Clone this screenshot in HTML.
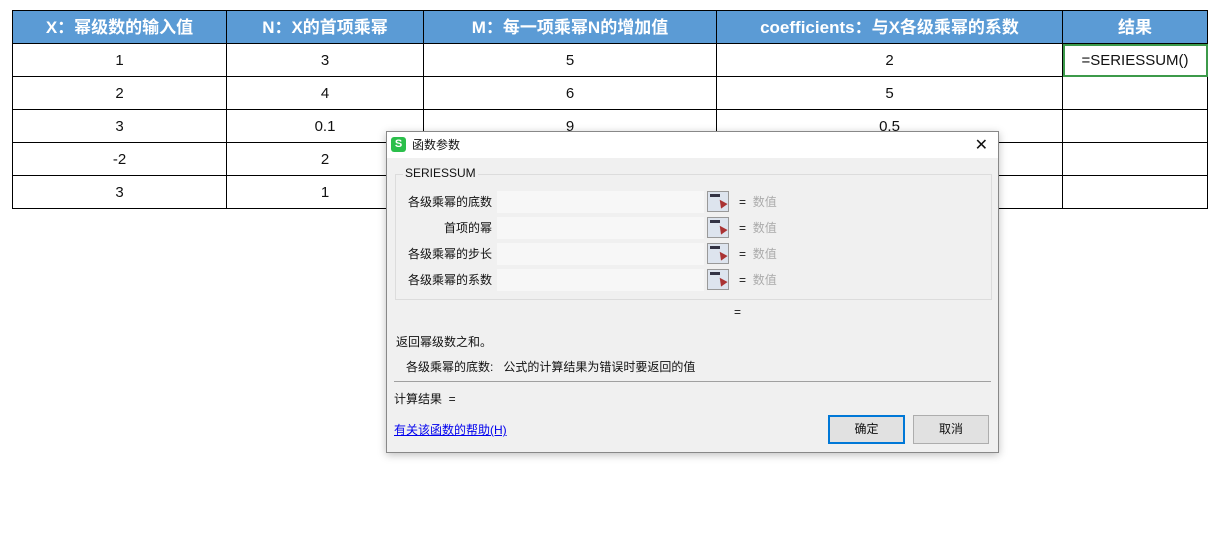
<!DOCTYPE html>
<html><head><meta charset="utf-8"><style>
body{margin:0;width:1216px;height:537px;background:#fff;font-family:"Liberation Sans","Noto Sans CJK SC",sans-serif;position:relative;overflow:hidden}
table{position:absolute;left:12px;top:10px;border-collapse:collapse;}
td{border:1px solid #000;text-align:center;font-size:15px;height:32px;padding:0;color:#111}
th{background:#5b9bd5;color:#fff;font-size:17px;font-weight:bold;border:1px solid #000;height:28px;padding:0 0 4px 0}
.dlg{position:absolute;left:386px;top:131px;width:611px;height:320px;background:#f0f0f0;border:1px solid #888;box-shadow:0 2px 8px rgba(0,0,0,.25);font-size:12px;color:#111}
.tb{height:26px;background:#fff;position:relative}
.abs{position:absolute}
.inp{position:absolute;left:110px;width:207px;height:22px;background:#f7f7f7}
.ib{position:absolute;left:320px;width:20px;height:19px;border:1px solid #999;background:#dde4ee}
.ib:before{content:"";position:absolute;left:2px;top:2px;width:10px;height:3px;background:#334}
.ib:after{content:"";position:absolute;left:10px;top:7px;border-left:4px solid transparent;border-right:4px solid transparent;border-bottom:8px solid #a33;transform:rotate(-35deg)}
.lab{position:absolute;right:506px;white-space:nowrap}
.btn{position:absolute;top:283px;width:74px;height:27px;border:1px solid #adadad;background:#e1e1e1;text-align:center;line-height:27px}
</style></head><body>
<table>
<tr><th style="width:213px">X：幂级数的输入值</th><th style="width:196px">N：X的首项乘幂</th><th style="width:292px">M：每一项乘幂N的增加值</th><th style="width:345px">coefficients：与X各级乘幂的系数</th><th style="width:144px">结果</th></tr>
<tr><td>1</td><td>3</td><td>5</td><td>2</td><td style="outline:2px solid #3c9a4a;outline-offset:-2px">=SERIESSUM()</td></tr>
<tr><td>2</td><td>4</td><td>6</td><td>5</td><td></td></tr>
<tr><td>3</td><td>0.1</td><td>9</td><td>0.5</td><td></td></tr>
<tr><td>-2</td><td>2</td><td></td><td></td><td></td></tr>
<tr><td>3</td><td>1</td><td></td><td></td><td></td></tr>
</table>
<div class="dlg">
<div class="tb"><div class="abs" style="left:4px;top:5px;width:15px;height:15px;background:#2bbf4b;border-radius:3px;color:#fff;font-size:11px;font-weight:bold;text-align:center;line-height:15px">S</div><div class="abs" style="left:25px;top:4px">函数参数</div><div class="abs" style="right:10px;top:3px;font-size:16px">✕</div></div>
<div class="abs" style="left:8px;top:42px;width:595px;height:124px;border:1px solid #dcdcdc"></div>
<div class="abs" style="left:16px;top:34px;background:#f0f0f0;padding:0 2px">SERIESSUM</div>
<div class="lab" style="top:61px">各级乘幂的底数</div><div class="inp" style="top:59px"></div><div class="ib" style="top:59px"></div><div class="abs" style="left:352px;top:61px">= &nbsp;<span style="color:#aaa">数值</span></div>
<div class="lab" style="top:87px">首项的幂</div><div class="inp" style="top:85px"></div><div class="ib" style="top:85px"></div><div class="abs" style="left:352px;top:87px">= &nbsp;<span style="color:#aaa">数值</span></div>
<div class="lab" style="top:113px">各级乘幂的步长</div><div class="inp" style="top:111px"></div><div class="ib" style="top:111px"></div><div class="abs" style="left:352px;top:113px">= &nbsp;<span style="color:#aaa">数值</span></div>
<div class="lab" style="top:139px">各级乘幂的系数</div><div class="inp" style="top:137px"></div><div class="ib" style="top:137px"></div><div class="abs" style="left:352px;top:139px">= &nbsp;<span style="color:#aaa">数值</span></div>
<div class="abs" style="left:347px;top:173px">=</div>
<div class="abs" style="left:9px;top:201px">返回幂级数之和。</div>
<div class="abs" style="left:19px;top:226px">各级乘幂的底数:&nbsp;&nbsp;&nbsp;公式的计算结果为错误时要返回的值</div>
<div class="abs" style="left:7px;top:249px;width:597px;border-top:1px solid #a0a0a0"></div>
<div class="abs" style="left:7px;top:258px">计算结果 &nbsp;=</div>
<div class="abs" style="left:7px;top:289px;color:#0000ee;text-decoration:underline">有关该函数的帮助(H)</div>
<div class="btn" style="left:441px;border:2px solid #0078d7;width:73px;height:25px;line-height:25px">确定</div>
<div class="btn" style="left:526px">取消</div>
</div>
</body></html>
